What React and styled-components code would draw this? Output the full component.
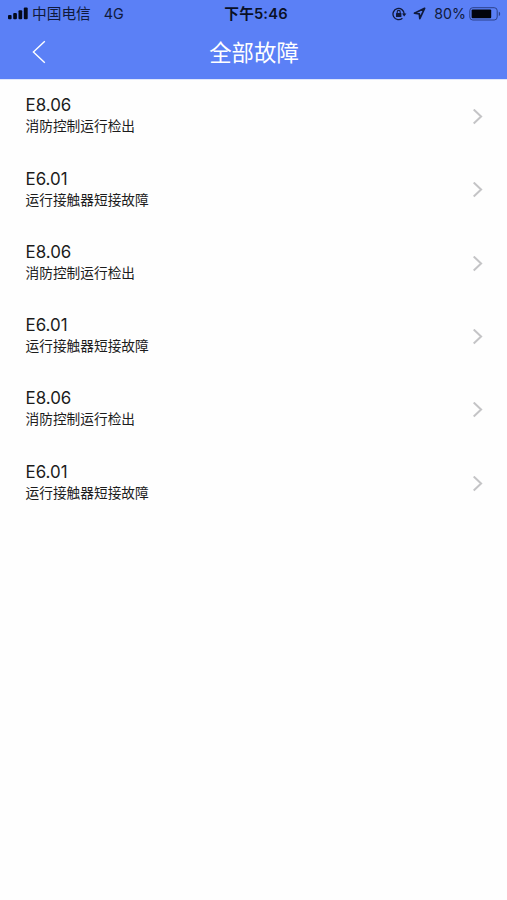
import React from 'react';
import styled, { createGlobalStyle } from 'styled-components';

const GlobalStyle = createGlobalStyle`
    body {
        margin: 0;
        background: #fefefe;
        font-family: Inter, "Noto Sans CJK SC", sans-serif;
    }
`;

const Screen = styled.main`
    display: flex;
    flex-direction: column;
    min-height: 900px;
    background: #fefefe;
`;

const Header = styled.header`
    height: 79px;
    background: #5b80f6;
    border-bottom: 1px solid #dfe6fc;
`;

const StatusBar = styled.div`
    display: grid;
    grid-template-columns: 1fr auto 1fr;
    align-items: center;
    height: 27px;
    padding: 0 5px 0 8px;
    color: #101a3c;
    font-size: 14px;
    line-height: 27px;
    white-space: nowrap;
`;

const StatusGroup = styled.div`
    display: flex;
    align-items: center;
    height: 27px;
    justify-content: ${props => props.$end ? 'flex-end' : 'flex-start'};
`;

const Carrier = styled.span`
    margin-left: 4px;
    padding-top: 2px;
    font-size: 14.7px;
    line-height: 27px;
`;

const Network = styled.span`
    margin-left: 13px;
    font-size: 14.4px;
`;

const Clock = styled.span`
    padding: 2px 0 0 2px;
    color: #0a1026;
    font-size: 14.7px;
    font-weight: 600;
    line-height: 25px;
    letter-spacing: 0.15px;
`;

const Percent = styled.span`
    margin: 0 3px 0 8px;
    font-size: 14.2px;
`;

const NavBar = styled.div`
    display: grid;
    grid-template-columns: 80px 1fr 80px;
    align-items: center;
    height: 50px;
`;

const BackButton = styled.button`
    display: flex;
    padding: 0 0 0 32px;
    background: none;
    border: none;
    cursor: pointer;
`;

const Title = styled.h1`
    margin: 0;
    padding: 1px 0 0 1px;
    color: #fff;
    font-size: 22.4px;
    font-weight: 400;
    line-height: 49px;
    text-align: center;
`;

const FaultList = styled.ul`
    margin: 0;
    padding: 0.4px 0 0;
    list-style: none;
`;

const FaultItem = styled.li`
    display: flex;
    justify-content: space-between;
    align-items: center;
    height: 73.3px;
    padding: 0 24px 0 25.5px;
`;

const FaultText = styled.div`
    padding-bottom: 3.6px;
`;

const FaultCode = styled.div`
    color: #1c1c1c;
    font-size: 16.9px;
    line-height: 22px;
`;

const FaultName = styled.div`
    color: #1c1c1c;
    font-size: 13.7px;
    line-height: 20px;
`;

const faults = [
    { code: 'E8.06', name: '消防控制运行检出' },
    { code: 'E6.01', name: '运行接触器短接故障' },
    { code: 'E8.06', name: '消防控制运行检出' },
    { code: 'E6.01', name: '运行接触器短接故障' },
    { code: 'E8.06', name: '消防控制运行检出' },
    { code: 'E6.01', name: '运行接触器短接故障' },
];

const SignalIcon = () => (
    <svg width="20" height="13" viewBox="0 0 20 13" fill="#050a1c">
        <rect x="0" y="8" width="3.6" height="4.2" rx="1" />
        <rect x="5.2" y="6" width="3.7" height="6.2" rx="1" />
        <rect x="10.5" y="3.3" width="3.7" height="8.9" rx="1" />
        <rect x="15.8" y="0.6" width="3.9" height="11.6" rx="1" />
    </svg>
);

const RotationLockIcon = () => (
    <svg width="15" height="14" viewBox="0 0 15 14" fill="none" stroke="#101a3c">
        <path d="M10.4 11.2A5.6 5.6 0 1 1 12.2 7" strokeWidth="1.3" />
        <path d="M10 6.4h4.4l-2.2 3z" fill="#101a3c" stroke="none" />
        <rect x="4" y="6" width="5.4" height="4" rx="0.5" fill="#101a3c" stroke="none" />
        <path d="M5.2 6.4V4.9a1.5 1.5 0 0 1 3 0v1.5" strokeWidth="1.1" />
    </svg>
);

const LocationIcon = styled(({ className }) => (
    <svg className={className} width="13" height="13" viewBox="0 0 13 13">
        <path
            d="M11.6 1.3L1.4 6.2l4.9.6.5 4.8z"
            fill="none"
            stroke="#101a3c"
            strokeWidth="1.7"
            strokeLinejoin="round"
        />
    </svg>
))`
    margin-left: 6px;
`;

const BatteryIcon = () => (
    <svg width="33" height="14" viewBox="0 0 33 14">
        <rect x="0.8" y="0.7" width="27.4" height="12.3" rx="3" fill="none" stroke="#2c408a" strokeWidth="1" />
        <rect x="2.6" y="2.4" width="19.6" height="8.9" rx="1" fill="#02040c" />
        <path d="M29.8 4.8c1.8.4 1.8 3.8 0 4.2z" fill="#2c408a" />
    </svg>
);

const BackIcon = () => (
    <svg width="14" height="24" viewBox="0 0 14 24" fill="none" stroke="#fff" strokeWidth="1.4">
        <path d="M12.8 1.2L1.4 12l11.4 10.8" />
    </svg>
);

const ChevronIcon = () => (
    <svg width="11" height="16" viewBox="0 0 11 16" fill="none" stroke="#c4c4c6" strokeWidth="2">
        <path d="M1.7 0.5L9.1 7.5l-7.4 7" />
    </svg>
);

const App = () => {
    return (
        <Screen>
            <GlobalStyle />
            <Header>
                <StatusBar>
                    <StatusGroup>
                        <SignalIcon />
                        <Carrier>中国电信</Carrier>
                        <Network>4G</Network>
                    </StatusGroup>
                    <Clock>下午5:46</Clock>
                    <StatusGroup $end>
                        <RotationLockIcon />
                        <LocationIcon />
                        <Percent>80%</Percent>
                        <BatteryIcon />
                    </StatusGroup>
                </StatusBar>
                <NavBar>
                    <BackButton aria-label="返回">
                        <BackIcon />
                    </BackButton>
                    <Title>全部故障</Title>
                </NavBar>
            </Header>
            <FaultList>
                {faults.map((fault, index) => (
                    <FaultItem key={index}>
                        <FaultText>
                            <FaultCode>{fault.code}</FaultCode>
                            <FaultName>{fault.name}</FaultName>
                        </FaultText>
                        <ChevronIcon />
                    </FaultItem>
                ))}
            </FaultList>
        </Screen>
    );
}

export default App;
